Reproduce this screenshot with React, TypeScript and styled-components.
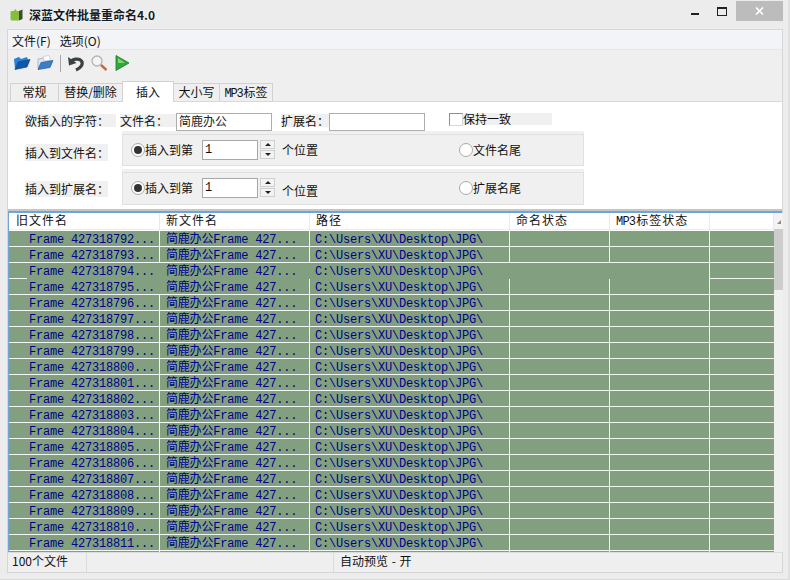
import React from "react";
import styled, { createGlobalStyle } from "styled-components";

const Global = createGlobalStyle`
  html, body { margin: 0; padding: 0; width: 790px; height: 580px; overflow: hidden; background: #ececec; }
  * { box-sizing: border-box; }
`;
const ui = `"Noto Sans CJK SC", "Liberation Sans", sans-serif`;
const mono = `"Liberation Mono", "Noto Sans CJK SC", monospace`;
const columns = "151px 150px 200px 100px 100px 64px";

const Win = styled.div`
  width: 790px; height: 580px; background: #ececec; display: flex; flex-direction: column;
  border-right: 2px solid #e0e0e0; border-bottom: 1px solid #dadada;
  font: 12px/16px ${ui}; color: #111;
`;
const TitleBar = styled.div`
  height: 29px; flex: none; display: flex; align-items: flex-start; padding-left: 10px;
`;
const AppIcon = styled.svg`width: 13px; height: 13px; margin-top: 8px; flex: none;`;
const Title = styled.div`
  margin: 6px 0 0 6px; font-size: 12px; line-height: 18px; font-weight: 700; color: #141b28;
  text-shadow: 0 0 3px #fff;
`;
const WinButtons = styled.div`margin-left: auto; display: flex; align-items: flex-start;`;
const MinIcon = styled.div`width: 8px; height: 2px; background: #222; margin: 13px 0 0 0;`;
const MaxIcon = styled.div`
  width: 10px; height: 9px; border: 1px solid #222; border-top-width: 2px; margin: 7px 0 0 18px;
`;
const CloseBtn = styled.div`
  width: 47px; height: 20px; margin: 1px 5px 0 9px; background: #bcbcbc; color: #fff;
  display: flex; align-items: center; justify-content: center;
`;
const Client = styled.div`
  margin: 0 0 0 7px; width: 776px; height: 544px; flex: none; border: 1px solid #d6d6d6;
  display: flex; flex-direction: column; background: #efefef;
`;
const MenuBar = styled.div`
  height: 20px; flex: none; background: #f3f4f7; border-bottom: 1px solid #e6e6e8;
  display: flex; gap: 9px; padding: 2px 0 0 4px; line-height: 17px;
`;
const Toolbar = styled.div`
  height: 28px; flex: none; display: flex; align-items: center; padding: 0 0 2px 5px;
`;
const ToolIcon = styled.svg`width: 18px; height: 18px; flex: none; margin-right: 5px;`;
const ToolSep = styled.div`width: 1px; height: 17px; background: #a8a8a8; margin: 0 6px 0 1px;`;
const Tabs = styled.div`
  height: 23px; flex: none; display: flex; align-items: flex-end; padding-left: 2px;
`;
const Tab = styled.div<{ $w: number; $active?: boolean }>`
  width: ${p => p.$w}px; text-align: center; flex: none;
  height: ${p => (p.$active ? 21 : 18)}px; line-height: ${p => (p.$active ? 20 : 16)}px;
  background: ${p => (p.$active ? "#fff" : "#efefef")};
  border: 1px solid #d2d2d2; border-bottom: none; margin-right: -1px;
  position: ${p => (p.$active ? "relative" : "static")};
  ${p => (p.$active ? "margin-bottom:-1px; z-index:1;" : "")}
`;
const TabMono = styled.span`font-family: ${mono}; letter-spacing: -1.2px; margin-right: 1px;`;
const Panel = styled.div`
  height: 110px; flex: none; background: #fff; border-top: 1px solid #d8d8d8; border-bottom: 2px solid #c6c6c6;
  padding: 11px 0 0 17px;
`;
const TopRow = styled.div`height: 17px; display: flex; align-items: flex-start;`;
const GrayLabel = styled.div<{ $w: number; $ml?: number; $mt?: number; $h?: number }>`
  width: ${p => p.$w}px; margin-left: ${p => p.$ml ?? 0}px; margin-top: ${p => p.$mt ?? 0}px; flex: none;
  background: #f0f0f0; height: ${p => p.$h ?? 15}px; line-height: ${p => p.$h ?? 15}px; white-space: nowrap;
`;
const TextInput = styled.div<{ $w: number }>`
  width: ${p => p.$w}px; height: 18px; flex: none; background: #fff; border: 1px solid #adadad;
  padding-left: 2px; line-height: 14px; color: #222;
`;
const CheckBox = styled.div`
  width: 14px; height: 13px; margin-left: 24px; border: 1px solid #8f8f8f; border-right-color: #d8d8d8; border-bottom-color: #d8d8d8; flex: none;
`;
const CheckWrap = styled.div`
  width: 89px; height: 12px; background: #f0f0f0; line-height: 11px; flex: none; white-space: nowrap;
`;
const GroupRow = styled.div<{ $h: number; $mt: number }>`
  display: flex; height: ${p => p.$h}px; margin-top: ${p => p.$mt}px;
`;
const GroupOuter = styled.div`
  margin-left: 14px; width: 462px; background: #f0f0f0; padding-top: 3px; flex: none; display: flex;
`;
const GroupBox = styled.div<{ $down: number }>`
  flex: 1; border: 1px solid #e0e0e0; display: flex; align-items: flex-start; padding: ${p => p.$down}px 0 0 8px; position: relative;
`;
const Radio = styled.div<{ $on?: boolean }>`
  width: 14px; height: 14px; border-radius: 50%; border: 1px solid #a9a9a9; background: #fff; flex: none;
  display: flex; align-items: center; justify-content: center; margin-top: 1px;
  &::after { content: ""; width: 8px; height: 8px; border-radius: 50%; background: ${p => (p.$on ? "#333" : "transparent")}; }
`;
const RadioText = styled.div<{ $w: number }>`width: ${p => p.$w}px; flex: none; line-height: 16px; white-space: nowrap;`;
const SpinInput = styled.div`
  width: 56px; height: 20px; background: #fff; border: 1px solid #a8a8a8; font: 12px/18px ${mono};
  padding-left: 2px; flex: none; margin-top: -2px;
`;
const Spin = styled.div`
  width: 15px; margin: -2px 0 0 2px; flex: none; display: flex; flex-direction: column; gap: 1px;
`;
const SpinBtn = styled.div<{ $up?: boolean }>`
  height: 9px; border: 1px solid #cfcfcf; background: #f3f3f3; display: flex; align-items: center; justify-content: center;
  &::after { content: ""; border-left: 3px solid transparent; border-right: 3px solid transparent;
    ${p => (p.$up ? "border-bottom: 3px solid #222;" : "border-top: 3px solid #222;")} }
`;
const PosText = styled.div<{ $mt: number }>`
  width: 177px; margin-left: 7px; flex: none; margin-top: ${p => p.$mt}px; line-height: 16px;
`;
const Table = styled.div`
  flex: none; height: 341px; background: #fff; border-top: 2px solid #6fa4d8; border-left: 1px solid #6fa4d8;
  display: flex; position: relative;
`;
const TableMain = styled.div`width: 765px; flex: none;`;
const Head = styled.div`
  height: 17px; display: grid; grid-template-columns: ${columns}; background: #fff; border-bottom: 1px solid #e6effa;
`;
const HeadCell = styled.div`
  border-right: 1px solid #e0ebf8; padding-left: 6px; line-height: 13px; font-size: 12px; letter-spacing: 1px; white-space: nowrap;
  &:first-child { padding-left: 7px; }
`;
const HeadMono = styled.span`font-family: ${mono}; letter-spacing: -0.8px; margin-right: 1px;`;
const Body = styled.div`padding-top: 1px; height: 322px; overflow: hidden;`;
const Row = styled.div`
  height: 16px; display: grid; grid-template-columns: ${columns}; background: #82a07f;
`;
const Cell = styled.div<{ $noRight?: boolean; $noBottom?: boolean; $pad?: number }>`
  height: 16px; padding: 3px 0 0 ${p => p.$pad ?? 6}px; white-space: nowrap;
  font: 12px/12px ${mono}; letter-spacing: -0.2px; color: #00008c;
  border-right: ${p => (p.$noRight ? "none" : "1px solid #f4f6f3")};
  border-bottom: ${p => (p.$noBottom ? "none" : "1px solid #f4f6f3")};
  position: relative;
`;
const LeftStub = styled.div`position: absolute; left: 0; bottom: 0; width: 18px; height: 1px; background: #f4f6f3;`;
const ScrollBar = styled.div`width: 9px; flex: none; background: #f0f0f0; display: flex; flex-direction: column;`;
const ScrollTop = styled.div`height: 16px; flex: none; position: relative; background: #f3f3f3;`;
const ScrollThumb = styled.div`height: 61px; background: #cdcdcd; flex: none;`;
const Status = styled.div`
  height: 20px; flex: none; display: grid; grid-template-columns: 79px 247px 1fr; background: #efefef;
  border-top: 1px solid #dcdcdc;
`;
const StatusCell = styled.div`
  padding-left: 4px; border-right: 1px solid #dcdcdc; line-height: 16px; white-space: nowrap;
  &:last-child { border-right: none; padding-left: 6px; word-spacing: 1px; }
`;

const rows = Array.from({ length: 20 }, (_, i) => 427318792 + i);

export default function App() {
  return (
    <Win>
      <Global />
      <TitleBar>
        <AppIcon viewBox="0 0 13 13">
          <path d="M0.5 4 Q0.5 3 2 3 L4 3 L5 1 L7 3 L9 3 L9 12.5 L2 12.5 Q0.5 12.5 0.5 11 Z" fill="#86bd3c" />
          <path d="M9 3 L12.5 1.5 L12.5 11 L9 12.5 Z" fill="#3f4a33" />
        </AppIcon>
        <Title>深蓝文件批量重命名4.0</Title>
        <WinButtons>
          <MinIcon />
          <MaxIcon />
          <CloseBtn>
            <svg width="9" height="8" viewBox="0 0 9 8">
              <path d="M1 0.5 L8 7.5 M8 0.5 L1 7.5" stroke="#fff" strokeWidth="1.6" />
            </svg>
          </CloseBtn>
        </WinButtons>
      </TitleBar>
      <Client>
        <MenuBar>
          <span>文件(F)</span>
          <span>选项(O)</span>
        </MenuBar>
        <Toolbar>
          <ToolIcon viewBox="0 0 18 18">
            <path d="M1 5 L6 3 L8 5 L14 3 L15 6 L5 8 L2 15 Z" fill="#2a7fd6" />
            <path d="M2 15.5 L5 8 L17 5.5 L14 13 Z" fill="#0f57ad" stroke="#0b3f85" strokeWidth="0.7" />
          </ToolIcon>
          <ToolIcon viewBox="0 0 18 18">
            <path d="M2 5 L7 4 L8 6 L13 5 L13 10 L2 14 Z" fill="#dfe6f0" stroke="#8fa5c4" strokeWidth="0.7" />
            <path d="M7 2.5 L13 1.5 L14.5 6 L8 7 Z" fill="#fff" stroke="#a5b5cc" strokeWidth="0.5" />
            <path d="M2 15.5 L5 8.5 L17 6.5 L14 13.5 Z" fill="#3d7fc4" stroke="#235a9b" strokeWidth="0.7" />
          </ToolIcon>
          <ToolSep />
          <ToolIcon viewBox="0 0 18 18">
            <path d="M3.5 9 C5 4.5 12 4 14.5 7 C16.5 10 14 14 9 16" fill="none" stroke="#3c4146" strokeWidth="3.2" />
            <path d="M1 3 L2 11.5 L9.5 9 Z" fill="#3c4146" />
          </ToolIcon>
          <ToolIcon viewBox="0 0 18 18">
            <circle cx="7" cy="7" r="5" fill="#f4f4f4" stroke="#b5b5b5" strokeWidth="1.4" />
            <path d="M11 11 L16.5 16" stroke="#c9683f" strokeWidth="2.4" />
          </ToolIcon>
          <ToolIcon viewBox="0 0 18 18">
            <path d="M3 1.5 L16 9 L3 16.5 Z" fill="#2fa83a" stroke="#1b7a28" strokeWidth="0.8" />
            <path d="M5 4 L12 9 L5 9 Z" fill="#7fd66f" />
          </ToolIcon>
        </Toolbar>
        <Tabs>
          <Tab $w={49}>常规</Tab>
          <Tab $w={65}>替换/删除</Tab>
          <Tab $w={52} $active>插入</Tab>
          <Tab $w={47}>大小写</Tab>
          <Tab $w={54}><TabMono>MP3</TabMono>标签</Tab>
        </Tabs>
        <Panel>
          <TopRow>
            <GrayLabel $w={91} $mt={1} $h={13}>欲插入的字符：</GrayLabel>
            <GrayLabel $w={49} $ml={4} $mt={1} $h={13}>文件名：</GrayLabel>
            <GrayLabel $w={7} $mt={1} $h={13} />
            <TextInput $w={96}>简鹿办公</TextInput>
            <GrayLabel $w={48} $ml={9} $mt={1} $h={13}>扩展名：</GrayLabel>
            <TextInput $w={96} />
            <CheckBox />
            <CheckWrap>保持一致</CheckWrap>
          </TopRow>
          <GroupRow $h={35} $mt={1}>
            <GrayLabel $w={83} $mt={13} $h={17}>插入到文件名：</GrayLabel>
            <GroupOuter>
              <GroupBox $down={7}>
                <Radio $on />
                <RadioText $w={57}>插入到第</RadioText>
                <SpinInput>1</SpinInput>
                <Spin><SpinBtn $up /><SpinBtn /></Spin>
                <PosText $mt={0}>个位置</PosText>
                <Radio />
                <RadioText $w={60}>文件名尾</RadioText>
              </GroupBox>
            </GroupOuter>
          </GroupRow>
          <GroupRow $h={36} $mt={3}>
            <GrayLabel $w={83} $mt={12} $h={16}>插入到扩展名：</GrayLabel>
            <GroupOuter>
              <GroupBox $down={7}>
                <Radio $on />
                <RadioText $w={57}>插入到第</RadioText>
                <SpinInput>1</SpinInput>
                <Spin><SpinBtn $up /><SpinBtn /></Spin>
                <PosText $mt={3}>个位置</PosText>
                <Radio />
                <RadioText $w={60}>扩展名尾</RadioText>
              </GroupBox>
            </GroupOuter>
          </GroupRow>
        </Panel>
        <Table>
          <TableMain>
            <Head>
              <HeadCell>旧文件名</HeadCell>
              <HeadCell>新文件名</HeadCell>
              <HeadCell>路径</HeadCell>
              <HeadCell>命名状态</HeadCell>
              <HeadCell><HeadMono>MP3</HeadMono>标签状态</HeadCell>
              <HeadCell />
            </Head>
            <Body>
              {rows.map((n, i) => {
                const gap = i === 2;
                const after = i === 3;
                return (
                  <Row key={n}>
                    <Cell $pad={20} $noBottom={gap} $noRight={gap || after}>
                      Frame {n}...
                      {gap && <LeftStub />}
                    </Cell>
                    <Cell $noBottom={gap} $noRight={gap}>简鹿办公Frame 427...</Cell>
                    <Cell $pad={5} $noBottom={gap} $noRight={gap}>C:\Users\XU\Desktop\JPG\</Cell>
                    <Cell $noBottom={gap} $noRight={gap} />
                    <Cell $noBottom={gap} />
                    <Cell $noRight />
                  </Row>
                );
              })}
              <Row>
                <Cell />
                <Cell />
                <Cell />
                <Cell />
                <Cell />
                <Cell $noRight />
              </Row>
            </Body>
          </TableMain>
          <ScrollBar>
            <ScrollTop>
              <svg width="9" height="16" viewBox="0 0 9 16">
                <path d="M3 11 L7 7 L7 11 Z" fill="#8a8a8a" />
              </svg>
            </ScrollTop>
            <ScrollThumb />
          </ScrollBar>
        </Table>
        <Status>
          <StatusCell>100个文件</StatusCell>
          <StatusCell />
          <StatusCell>自动预览 - 开</StatusCell>
        </Status>
      </Client>
    </Win>
  );
}
